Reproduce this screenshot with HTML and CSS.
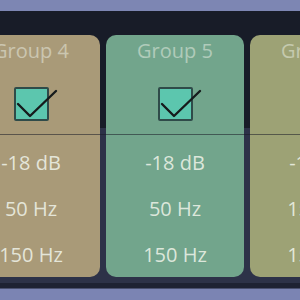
FILE: index.html
```html
<!DOCTYPE html>
<html>
<head>
<meta charset="utf-8">
<link rel="stylesheet" href="styles.css">
</head>
<body>
<div class="topbar"></div>
<main class="mixer">
  <div class="divider"></div>
  <div class="strips">
    <section class="strip tan">
      <div class="name">Group 4</div>
      <div class="check"><svg width="46" height="36" viewBox="0 0 46 36"><path d="M4 17 L16 29 L42 4" fill="none" stroke="#161b1c" stroke-width="2.4" stroke-linecap="round" stroke-linejoin="round"/></svg></div>
      <div class="val first">-18 dB</div>
      <div class="val">50 Hz</div>
      <div class="val">150 Hz</div>
    </section>
    <section class="strip green">
      <div class="name">Group 5</div>
      <div class="check"><svg width="46" height="36" viewBox="0 0 46 36"><path d="M4 17 L16 29 L42 4" fill="none" stroke="#161b1c" stroke-width="2.4" stroke-linecap="round" stroke-linejoin="round"/></svg></div>
      <div class="val first">-18 dB</div>
      <div class="val">50 Hz</div>
      <div class="val">150 Hz</div>
    </section>
    <section class="strip olive">
      <div class="name">Group 6</div>
      <div class="check"><svg width="46" height="36" viewBox="0 0 46 36"><path d="M4 17 L16 29 L42 4" fill="none" stroke="#161b1c" stroke-width="2.4" stroke-linecap="round" stroke-linejoin="round"/></svg></div>
      <div class="val first">-18 dB</div>
      <div class="val">150 Hz</div>
      <div class="val">150 Hz</div>
    </section>
  </div>
</main>
<div class="footer"></div>
</body>
</html>
```
FILE: styles.css
```css
html, body {
  margin: 0;
  padding: 0;
  overflow: hidden;
  width: 300px;
  height: 300px;
  background: #7b84b3;
  font-family: "Open Sans", "DejaVu Sans", sans-serif;
}
.topbar {
  height: 11px;
  background: #7d86b3;
}
.mixer {
  position: relative;
  height: 278px;
  box-sizing: border-box;
  padding-top: 24px;
  background: linear-gradient(#181c28 0, #181c28 117px, #2d3248 117px, #2d3248 272px, #1e2233 272px, #1e2233 277px, #4a5070 277px);
}
.divider {
  position: absolute;
  left: 0;
  right: 0;
  top: 123px;
  height: 1px;
  background: rgba(25, 28, 38, 0.55);
  z-index: 2;
}
.strips {
  display: flex;
  gap: 6px;
  margin-left: -38px;
}
.strip {
  flex: 0 0 138px;
  height: 242px;
  border-radius: 10px;
  display: flex;
  flex-direction: column;
  align-items: center;
}
.tan { background: #a99a78; }
.green { background: #72a58c; }
.olive { background: #9da275; }
.name {
  margin-top: 4px;
  font-size: 20px;
  line-height: 24px;
  color: rgba(238, 242, 232, 0.5);
}
.check {
  position: relative;
  margin-top: 24px;
  width: 31px;
  height: 30px;
  border: 2px solid #2f4b49;
  border-radius: 2px;
  background: #5cc6ae;
}
.check svg {
  position: absolute;
  left: -2px;
  top: -2px;
  overflow: visible;
}
.val {
  margin-top: 22px;
  font-size: 20px;
  line-height: 24px;
  color: rgba(240, 244, 234, 0.85);
}
.val.first {
  margin-top: 30px;
}
.footer {
  height: 11px;
  background: #7b84b3;
}
```
